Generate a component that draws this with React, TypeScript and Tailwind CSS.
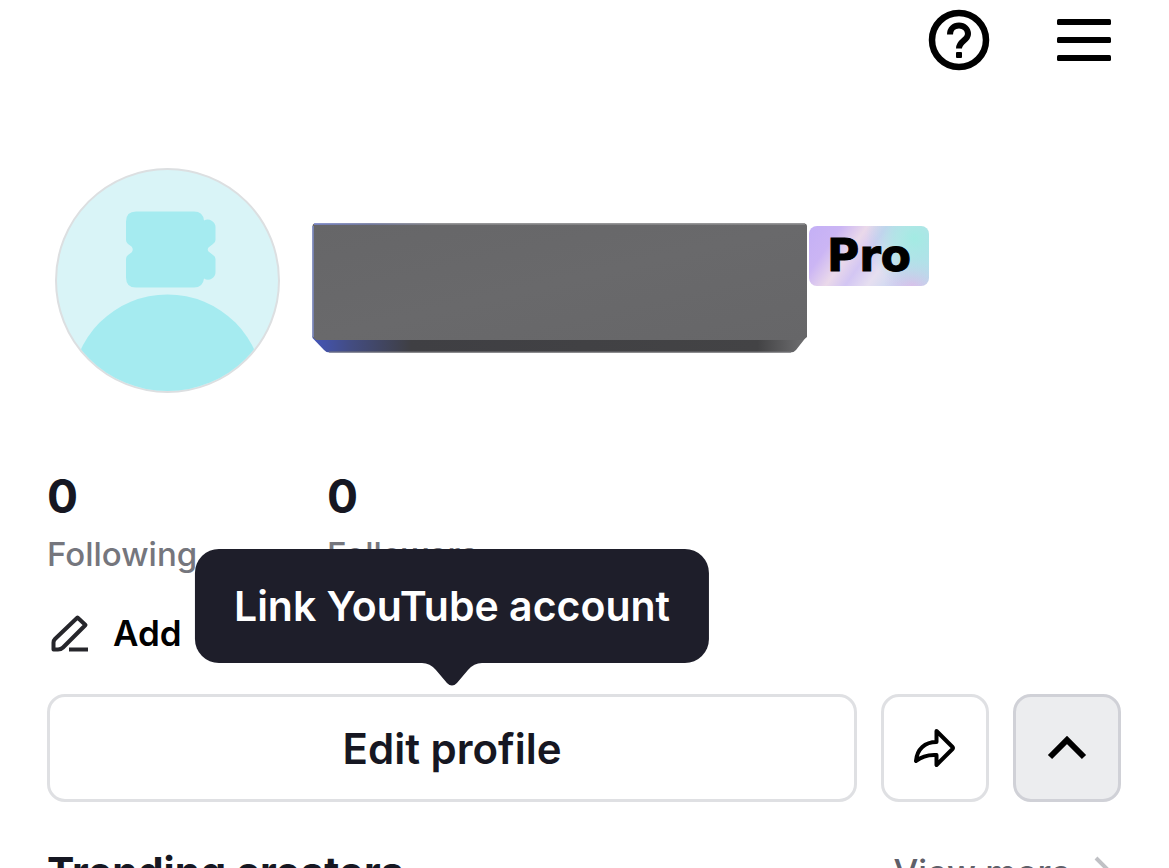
import React from 'react';

interface StatProps {
  value: number;
  label: string;
}

const Stat: React.FC<StatProps> = ({ value, label }) => (
  <div className="w-[280px]">
    <div className="text-[46px] leading-[56px] font-bold text-[#161722]">{value}</div>
    <div className="mt-2 text-[33px] leading-[44px] font-medium text-[#75767d]">{label}</div>
  </div>
);

const HelpIcon = () => (
  <svg width="62" height="62" viewBox="0 0 62 62" fill="none" stroke="#000">
    <circle cx="31" cy="31" r="27" strokeWidth="6.500" />
    <path d="M22 25.500C22 20 26 16.500 31 16.500S40 20 40 25C40 31.500 31 32 31 39.500" strokeWidth="6" />
    <rect x="28" y="43" width="6" height="6" rx="1" fill="#000" stroke="none" />
  </svg>
);

const MenuIcon = () => (
  <svg width="54" height="42" viewBox="0 0 54 42" fill="#000">
    <rect y="0" width="54" height="6" rx="1.500" />
    <rect y="18" width="54" height="6" rx="1.500" />
    <rect y="36" width="54" height="6" rx="1.500" />
  </svg>
);

const Avatar = () => (
  <svg width="225" height="225" viewBox="0 0 225 225" className="shrink-0" role="img" aria-label="Avatar">
    <defs>
      <clipPath id="avatar-clip">
        <circle cx="112.500" cy="112.500" r="110.500" />
      </clipPath>
    </defs>
    <circle cx="112.500" cy="112.500" r="111.500" fill="#d9f4f7" stroke="#dcdfe1" strokeWidth="2" />
    <g fill="#a5ebf0" clipPath="url(#avatar-clip)">
      {/* Ticket shaped head */}
      <path d="M81 43.500H139Q148 43.500 149 52.500Q153 50.500 157 53Q160.500 55.500 160.500 59V72Q160.500 74.500 158 76L153.500 79.500Q152 81.500 153.500 83.500L158 87Q160.500 88.500 160.500 91V104Q160.500 108 157 110.500Q153 113 149 110.500Q148 119.500 139 119.500H81Q71 119.500 71 109.500V91Q71 88.500 73 87L76.500 84.500Q79 81.500 76.500 78.500L73 76Q71 74.500 71 72V53.500Q71 43.500 81 43.500Z" />
      <circle cx="112.500" cy="222.500" r="96" />
    </g>
  </svg>
);

// Covers the user name with a bevelled grey block
const NameBlock = () => (
  <svg width="496" height="130" viewBox="0 0 496 130" className="shrink-0" aria-hidden="true">
    <defs>
      <linearGradient id="block-face" x1="0" y1="0" x2="1" y2="1">
        <stop offset="0" stopColor="#666668" />
        <stop offset="0.500" stopColor="#69696b" />
        <stop offset="1" stopColor="#666668" />
      </linearGradient>
      <linearGradient id="block-base" x1="0" y1="0" x2="1" y2="0">
        <stop offset="0" stopColor="#4355b8" />
        <stop offset="0.080" stopColor="#434c80" />
        <stop offset="0.200" stopColor="#3f3f43" />
        <stop offset="0.900" stopColor="#434345" />
        <stop offset="1" stopColor="#707072" />
      </linearGradient>
      <linearGradient id="block-edge" gradientUnits="userSpaceOnUse" x1="0" y1="0" x2="495" y2="0">
        <stop offset="0" stopColor="#7e8cd8" />
        <stop offset="0.120" stopColor="#7780ac" />
        <stop offset="0.250" stopColor="#8c8c8e" />
        <stop offset="1" stopColor="#8c8c8e" />
      </linearGradient>
    </defs>
    <path d="M0.500 113H495L484 127Q482 129.500 478 129.500H18Q14 129.500 12 127L0.500 115Z" fill="url(#block-base)" />
    <path d="M3 0.500H492Q495 0.500 495 3.500V114L491 117H4L0.500 114V3.500Q0.500 0.500 3 0.500Z" fill="url(#block-face)" />
    <path d="M2 1H493" stroke="url(#block-edge)" strokeWidth="1.500" />
    <path d="M1 3V114" stroke="#7e8cc8" strokeWidth="1.500" />
    <path d="M17 129H479" stroke="#77777a" strokeWidth="1" />
  </svg>
);

const PencilIcon = () => (
  <svg width="38" height="38" viewBox="0 0 38 38" fill="none" stroke="#26262b" strokeWidth="4" strokeLinejoin="round">
    <path d="M26.500 3.500L34.500 11L12 33.500Q10 35.500 7 35.500H2.500V28.500Q2.500 26.500 4 25Z" />
    <path d="M18 35.500H37" />
  </svg>
);

const ShareIcon = () => (
  <svg width="44" height="44" viewBox="0 0 44 44" fill="none" stroke="#000" strokeWidth="4" strokeLinejoin="round">
    <path d="M23.500 5L39.500 21Q40.500 22 39.500 23L23.500 39V29C15 28.500 9 30 3 35C4 23 12 16 23.500 16Z" />
  </svg>
);

const ChevronUp = () => (
  <svg width="44" height="44" viewBox="0 0 44 44" fill="none" stroke="#000" strokeWidth="6">
    <path d="M5 31L22 14L39 31" />
  </svg>
);

const Tooltip: React.FC<{ text: string }> = ({ text }) => (
  <div
    role="tooltip"
    className="absolute bottom-full left-1/2 mb-[31px] -translate-x-1/2 rounded-[24px] bg-[#1e1e2a] px-[39px] py-[29px] text-[41px] leading-[56px] font-semibold whitespace-nowrap text-white"
  >
    {text}
    <svg width="60" height="23" viewBox="0 0 60 23" className="absolute top-full left-1/2 -translate-x-1/2" fill="#1e1e2a">
      <path d="M0 0H60Q52 0 46 7L35 20Q30 25 25 20L14 7Q8 0 0 0Z" />
    </svg>
  </div>
);

export default function App() {
  return (
    <div className="h-screen overflow-hidden bg-white font-['Inter',sans-serif] text-[#161722]">
      <header className="flex items-center justify-end gap-[67px] pt-[9px] pr-[58px]">
        <button aria-label="Help">
          <HelpIcon />
        </button>
        <button aria-label="Menu">
          <MenuIcon />
        </button>
      </header>

      <main className="pr-12 pl-[47px]">
        <section className="mt-[97px] ml-2 flex items-start">
          <Avatar />
          <div className="mt-[55px] ml-8 flex items-start">
            <NameBlock />
            <span className="mt-[3px] ml-px flex h-[60px] w-[120px] items-center justify-center rounded-[8px] bg-[radial-gradient(circle_at_88%_20%,#a3ebe3_0%,#a9e6e5cc_18%,transparent_42%),radial-gradient(circle_at_86%_98%,#d9c0ea_0%,transparent_24%),linear-gradient(125deg,#c4b0f6_0%,#cbb5f4_20%,#ead9ea_36%,#d3c6f3_48%,#e6dff0_62%,#c8d8f2_80%,#b5dcec_100%)] font-['DejaVu_Sans',sans-serif] text-[44px] leading-[60px] font-bold text-black [-webkit-text-stroke:1px_black]">
              Pro
            </span>
          </div>
        </section>

        <section className="mt-[75px] flex">
          <Stat value={0} label="Following" />
          <Stat value={0} label="Followers" />
        </section>

        <button className="mt-8 ml-1 flex items-center gap-6 text-[35px] leading-[50px] font-semibold text-black">
          <PencilIcon />
          Add
        </button>

        <div className="mt-9 flex gap-6">
          <div className="relative flex-1">
            <button className="h-[108px] w-full rounded-[18px] border-3 border-[#dfe0e3] text-[42px] font-semibold">
              Edit profile
            </button>
            <Tooltip text="Link YouTube account" />
          </div>
          <button
            aria-label="Share"
            className="flex size-[108px] items-center justify-center rounded-[18px] border-3 border-[#dfe0e3]"
          >
            <ShareIcon />
          </button>
          <button
            aria-label="Collapse"
            className="flex size-[108px] items-center justify-center rounded-[18px] border-3 border-[#d0d1d7] bg-[#ecedef]"
          >
            <ChevronUp />
          </button>
        </div>

        <section className="mt-[42px] flex items-center justify-between">
          <h2 className="text-[41px] leading-[56px] font-bold">Trending creators</h2>
          <a href="#" className="flex items-center gap-4 text-[35px] leading-[56px] font-medium text-[#5f6069]">
            View more
            <svg width="34" height="32" viewBox="0 0 34 32" fill="none" stroke="#c0c1c5" strokeWidth="4">
              <path d="M9 2L23 16L9 30" />
            </svg>
          </a>
        </section>
      </main>
    </div>
  );
}
